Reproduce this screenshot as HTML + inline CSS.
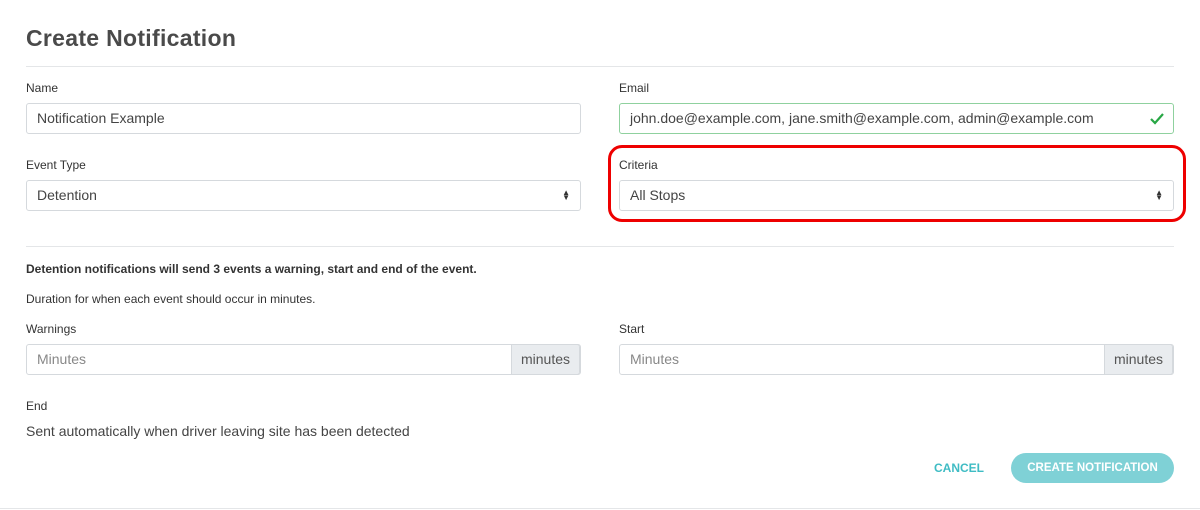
<!DOCTYPE html>
<html><head><style>
*{box-sizing:border-box;margin:0;padding:0}
body{width:1200px;height:510px;background:#fff;font-family:"Liberation Sans",sans-serif;color:#333;position:relative;overflow:hidden}
.a{position:absolute}
h1{position:absolute;left:26px;top:25px;font-size:23px;font-weight:bold;color:#4a4a4a;letter-spacing:0.3px}
.hr{position:absolute;left:26px;right:0;height:1px;background:#e4e6e8}
.lbl{position:absolute;font-size:12px;color:#333}
.inp{position:absolute;height:31px;border:1px solid #d5d9dd;border-radius:3px;font-size:14px;color:#444;padding:0 10px;line-height:29px;background:#fff}
.ph{color:#888}
.add{position:absolute;right:0;top:-1px;height:31px;border:1px solid #d5d9dd;background:#e9ecef;border-radius:0 3px 3px 0;font-size:14px;line-height:29px;padding:0 9px;color:#555}
.arr{position:absolute;right:10px;top:9px;font-size:8px;line-height:5px;color:#333}
</style></head><body>
<h1>Create Notification</h1>
<div class="hr" style="top:66px;right:26px"></div>
<div class="lbl" style="left:26px;top:81px">Name</div>
<div class="inp" style="left:26px;top:103px;width:555px">Notification Example</div>
<div class="lbl" style="left:619px;top:81px">Email</div>
<div class="inp" style="left:619px;top:103px;width:555px;border-color:#8fd19e">john.doe@example.com, jane.smith@example.com, admin@example.com
<svg class="a" style="right:8px;top:8px" width="16" height="14" viewBox="0 0 16 14"><path d="M2 7l4 4 8-9" fill="none" stroke="#28a745" stroke-width="2.2"/></svg></div>
<div class="lbl" style="left:26px;top:158px">Event Type</div>
<div class="inp" style="left:26px;top:180px;width:555px">Detention<div class="arr">▲<br>▼</div></div>
<div class="a" style="left:608px;top:145px;width:578px;height:77px;border:3px solid #ee0000;border-radius:14px"></div>
<div class="lbl" style="left:619px;top:158px">Criteria</div>
<div class="inp" style="left:619px;top:180px;width:555px">All Stops<div class="arr">▲<br>▼</div></div>
<div class="hr" style="top:246px;right:26px"></div>
<div class="lbl" style="left:26px;top:262px;font-weight:bold">Detention notifications will send 3 events a warning, start and end of the event.</div>
<div class="lbl" style="left:26px;top:292px">Duration for when each event should occur in minutes.</div>
<div class="lbl" style="left:26px;top:322px">Warnings</div>
<div class="inp" style="left:26px;top:344px;width:555px"><span class="ph">Minutes</span><div class="add">minutes</div></div>
<div class="lbl" style="left:619px;top:322px">Start</div>
<div class="inp" style="left:619px;top:344px;width:555px"><span class="ph">Minutes</span><div class="add">minutes</div></div>
<div class="lbl" style="left:26px;top:399px">End</div>
<div class="a" style="left:26px;top:423px;font-size:14px;color:#444">Sent automatically when driver leaving site has been detected</div>
<div class="a" style="left:934px;top:461px;font-size:12px;color:#3fbcc4;font-weight:bold">CANCEL</div>
<div class="a" style="left:1011px;top:453px;width:163px;height:30px;border-radius:15px;background:#7fd1d6;color:#fff;font-size:11.5px;font-weight:bold;text-align:center;line-height:30px">CREATE NOTIFICATION</div>
<div class="hr" style="top:508px;left:0"></div>
</body></html>
